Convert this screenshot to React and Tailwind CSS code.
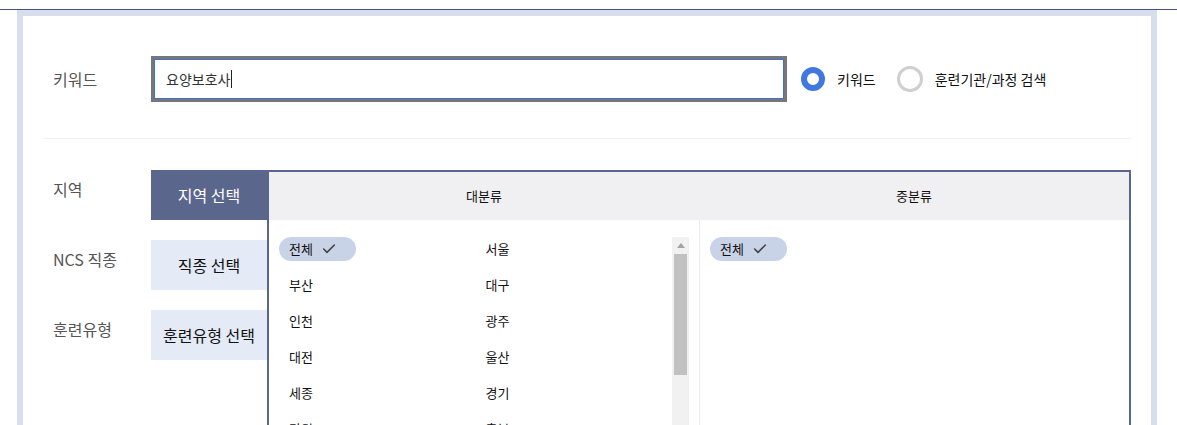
import { Check } from 'lucide-react';

const font = { fontFamily: '"Noto Sans CJK KR", "Noto Sans", sans-serif' };

const regions = [
    '전체', '서울', '부산', '대구', '인천', '광주', '대전', '울산',
    '세종', '경기', '강원', '충북', '충남', '전북', '전남', '경북',
];

const labels = ['지역', 'NCS 직종', '훈련유형'];
const tabs = ['지역 선택', '직종 선택', '훈련유형 선택'];

function Chip({ children }) {
    return (
        <span className="inline-flex h-[24px] items-center gap-[8px] rounded-full bg-[#c9d3e8] pl-[10px] pr-[19px] text-[13px] text-[#111]">
            {children}
            <Check size={16} strokeWidth={2.4} className="text-[#444]" />
        </span>
    );
}

function Radio({ checked, label }) {
    return (
        <label className="flex items-center gap-[12px] text-[14px] text-[#111]">
            <span
                className={
                    checked
                        ? 'h-[24px] w-[24px] rounded-full border-[6px] border-[#4377e0] bg-white'
                        : 'h-[26px] w-[26px] rounded-full border-[3px] border-[#cfcfcf] bg-white'
                }
            />
            {label}
        </label>
    );
}

export default function App() {
    return (
        <div className="min-h-screen bg-white pt-[9px]" style={font}>
            <div className="border-t border-[#45508a]">
                <div className="ml-[17px] w-[1140px] border-x-[6px] border-t-[6px] border-[#d8dfec] bg-white">
                    <div className="px-[20px]">
                        {/* keyword row */}
                        <div className="flex items-center pb-[36px] pt-[40px]">
                            <div className="w-[108px] pl-[10px] text-[16px] text-[#555]">
                                키워드
                            </div>
                            <div className="flex h-[46px] w-[636px] items-center border-[3px] border-[#777] pl-[12px] text-[14px] text-[#333] shadow-[inset_0_0_0_1px_#3f6fd8]">
                                요양보호사
                                <span className="ml-px h-[18px] w-px bg-[#222]" />
                            </div>
                            <div className="ml-[14px] flex items-center gap-[21px]">
                                <Radio checked label="키워드" />
                                <Radio label="훈련기관/과정 검색" />
                            </div>
                        </div>

                        <div className="border-t border-[#f1f1f1]" />

                        {/* region row */}
                        <div className="flex pt-[31px]">
                            <div className="w-[108px] pl-[10px]">
                                {labels.map((l) => (
                                    <div
                                        key={l}
                                        className="h-[70px] pt-[7px] text-[16px] leading-[24px] text-[#555]"
                                    >
                                        {l}
                                    </div>
                                ))}
                            </div>
                            <div className="w-[116px]">
                                {tabs.map((t, i) => (
                                    <div
                                        key={t}
                                        className={`mb-[20px] flex h-[50px] items-center justify-center text-[16px] ${
                                            i === 0
                                                ? 'bg-[#5b668c] text-white'
                                                : 'bg-[#e4eaf6] text-[#111]'
                                        }`}
                                    >
                                        {t}
                                    </div>
                                ))}
                            </div>
                            <div className="h-[300px] flex-1 overflow-hidden border-2 border-b-0 border-[#5b668c]">
                                <div className="grid h-[48px] grid-cols-2 bg-[#f0f0f2] text-[13px] text-[#111]">
                                    <div className="flex items-center justify-center">대분류</div>
                                    <div className="flex items-center justify-center">중분류</div>
                                </div>
                                <div className="grid h-full grid-cols-2">
                                    <div className="flex">
                                        <div className="grid flex-1 grid-cols-2 content-start pl-[10px] pt-[11px]">
                                            {regions.map((r, i) => (
                                                <div key={r} className="flex h-[36px] items-center">
                                                    {i === 0 ? (
                                                        <Chip>{r}</Chip>
                                                    ) : (
                                                        <span className="px-[10px] text-[13px] text-[#111]">
                                                            {r}
                                                        </span>
                                                    )}
                                                </div>
                                            ))}
                                        </div>
                                        <div className="mr-[10px] mt-[17px] w-[17px] bg-[#f1f1f1]">
                                            <div className="flex h-[17px] items-center justify-center">
                                                <span className="h-0 w-0 border-x-[4px] border-b-[5px] border-x-transparent border-b-[#a3a3a3]" />
                                            </div>
                                            <div className="mx-[2px] h-[121px] bg-[#c1c1c1]" />
                                        </div>
                                    </div>
                                    <div className="border-l border-[#ededed] pl-[10px] pt-[11px]">
                                        <div className="flex h-[36px] items-center">
                                            <Chip>전체</Chip>
                                        </div>
                                    </div>
                                </div>
                            </div>
                        </div>
                    </div>
                </div>
            </div>
        </div>
    );
}
